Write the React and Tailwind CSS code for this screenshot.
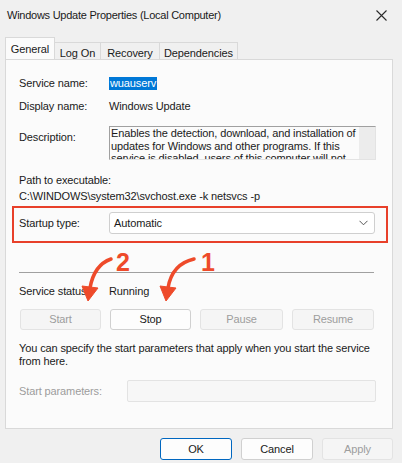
import React from 'react';

const font = { fontFamily: '"Liberation Sans", Arial, sans-serif' };

const Tab = ({ label, active, width }) => (
  <div
    className={
      active
        ? 'h-[22px] -mb-px bg-[#fbfbfb] border border-b-0 border-[#d9d9d9] flex items-start justify-center pt-[3px] relative z-10'
        : 'h-[17px] mt-[5px] bg-[#f0f0f0] border border-l-0 border-b-0 border-[#d9d9d9] flex items-start justify-center pt-[2px]'
    }
    style={{ width }}
  >
    {label}
  </div>
);

const Btn = ({ label, disabled, primary, className = '' }) => (
  <div
    className={
      'h-[21px] flex items-center justify-center rounded-[3px] border ' +
      (primary
        ? 'bg-[#fdfdfd] border-[#0067c0] text-[#1a1a1a] '
        : disabled
        ? 'bg-[#f5f5f5] border-[#e3e3e3] text-[#9d9d9d] '
        : 'bg-[#fdfdfd] border-[#d0d0d0] text-[#1a1a1a] ') +
      className
    }
  >
    {label}
  </div>
);

const Arrows = () => (
  <svg className="absolute left-0 top-0 pointer-events-none" width="402" height="463" viewBox="0 0 402 463">
    <g fill="#ee4a2a" stroke="#ee4a2a">
      <path d="M111 259 Q94 265 90 288" fill="none" strokeWidth="3.5" strokeLinecap="round" />
      <polygon points="82,286 98,288 88,301" strokeWidth="1" strokeLinejoin="round" />
      <path d="M194 259 Q172 264 168 288" fill="none" strokeWidth="3.5" strokeLinecap="round" />
      <polygon points="160,286 176,288 166,301" strokeWidth="1" strokeLinejoin="round" />
    </g>
    <text x="116" y="271" fill="#ee4a2a" fontSize="25" fontWeight="700" fontFamily="Liberation Sans, Arial, sans-serif">2</text>
    <text x="201" y="271" fill="#ee4a2a" fontSize="25" fontWeight="700" fontFamily="Liberation Sans, Arial, sans-serif">1</text>
  </svg>
);

export default function App() {
  return (
    <div className="w-[402px] h-[463px] bg-[#f0f0f0] relative overflow-hidden text-[11px] tracking-[-0.12px] text-[#1a1a1a]" style={font}>
      {/* title bar */}
      <div className="h-[30px] flex items-center justify-between pl-[7px] pr-[15px]">
        <span className="tracking-[-0.25px]">Windows Update Properties (Local Computer)</span>
        <svg width="11" height="11" viewBox="0 0 11 11">
          <path d="M0.5 0.5 L10.5 10.5 M10.5 0.5 L0.5 10.5" stroke="#2a2a2a" strokeWidth="1.1" />
        </svg>
      </div>

      {/* tabs */}
      <div className="flex items-start pl-[5px] mt-[7px]">
        <Tab label="General" active width={50} />
        <Tab label="Log On" width={46} />
        <Tab label="Recovery" width={59} />
        <Tab label="Dependencies" width={78} />
      </div>

      {/* panel */}
      <div className="mx-[5px] w-[388px] h-[370px] bg-[#fbfbfb] border border-[#d9d9d9] pl-[13px] pr-[16px]">
        <div className="flex items-center h-[16px] mt-[15px]">
          <span className="w-[90px]">Service name:</span>
          <span className="bg-[#0078d7] text-white px-[1px] leading-[13px]">wuauserv</span>
        </div>
        <div className="flex items-center h-[16px] mt-[7px]">
          <span className="w-[90px]">Display name:</span>
          <span>Windows Update</span>
        </div>
        <div className="flex mt-[12px]">
          <span className="w-[90px] pt-[3px]">Description:</span>
          <div className="flex-1 h-[34px] border border-[#a0a0a0] border-r-[#e3e3e3] border-b-[#e3e3e3] bg-[#fbfbfb] flex overflow-hidden">
            <div className="flex-1 pl-[1px] leading-[12.5px] overflow-hidden">
              Enables the detection, download, and installation of updates for Windows and other programs. If this service is disabled, users of this computer will not be able to use Windows Update.
            </div>
            <div className="w-[16px] bg-[#ececec]" />
          </div>
        </div>
        <div className="mt-[12px] leading-[16px]">
          <div>Path to executable:</div>
          <div>C:\WINDOWS\system32\svchost.exe -k netsvcs -p</div>
        </div>

        {/* startup type, highlighted */}
        <div className="mt-[2px] ml-[-7px] w-[376px] border-2 border-[#e8402a] pl-[5px] pr-[11px] pt-[4px] pb-[7px] flex items-center">
          <span className="w-[90px]">Startup type:</span>
          <div className="flex-1 h-[22px] bg-white border border-[#cfcfcf] rounded-[3px] flex items-center justify-between pl-[4px] pr-[6px]">
            <span>Automatic</span>
            <svg width="9" height="6" viewBox="0 0 9 6">
              <path d="M0.5 0.8 L4.5 4.8 L8.5 0.8" fill="none" stroke="#555" strokeWidth="1" />
            </svg>
          </div>
        </div>

        <div className="mt-[29px] h-px bg-[#a0a0a0] mr-[2px]" />

        <div className="flex items-center h-[16px] mt-[10px]">
          <span className="w-[90px]">Service status:</span>
          <span>Running</span>
        </div>

        <div className="flex gap-[9px] mt-[10px] pl-[1px]">
          <Btn label="Start" disabled className="w-[81px]" />
          <Btn label="Stop" className="w-[81px]" />
          <Btn label="Pause" disabled className="w-[83px]" />
          <Btn label="Resume" disabled className="w-[82px]" />
        </div>

        <div className="mt-[12px] leading-[13px]">
          You can specify the start parameters that apply when you start the service from here.
        </div>

        <div className="flex items-center mt-[12px]">
          <span className="w-[108px] text-[#9d9d9d]">Start parameters:</span>
          <div className="flex-1 h-[22px] bg-[#f7f7f7] border border-[#e3e3e3] rounded-[2px]" />
        </div>
      </div>

      {/* footer buttons */}
      <div className="flex justify-end gap-[9px] pr-[9px] mt-[9px]">
        <Btn label="OK" primary className="w-[72px] h-[22px]" />
        <Btn label="Cancel" className="w-[72px] h-[22px]" />
        <Btn label="Apply" disabled className="w-[71px] h-[22px]" />
      </div>

      <Arrows />
    </div>
  );
}
